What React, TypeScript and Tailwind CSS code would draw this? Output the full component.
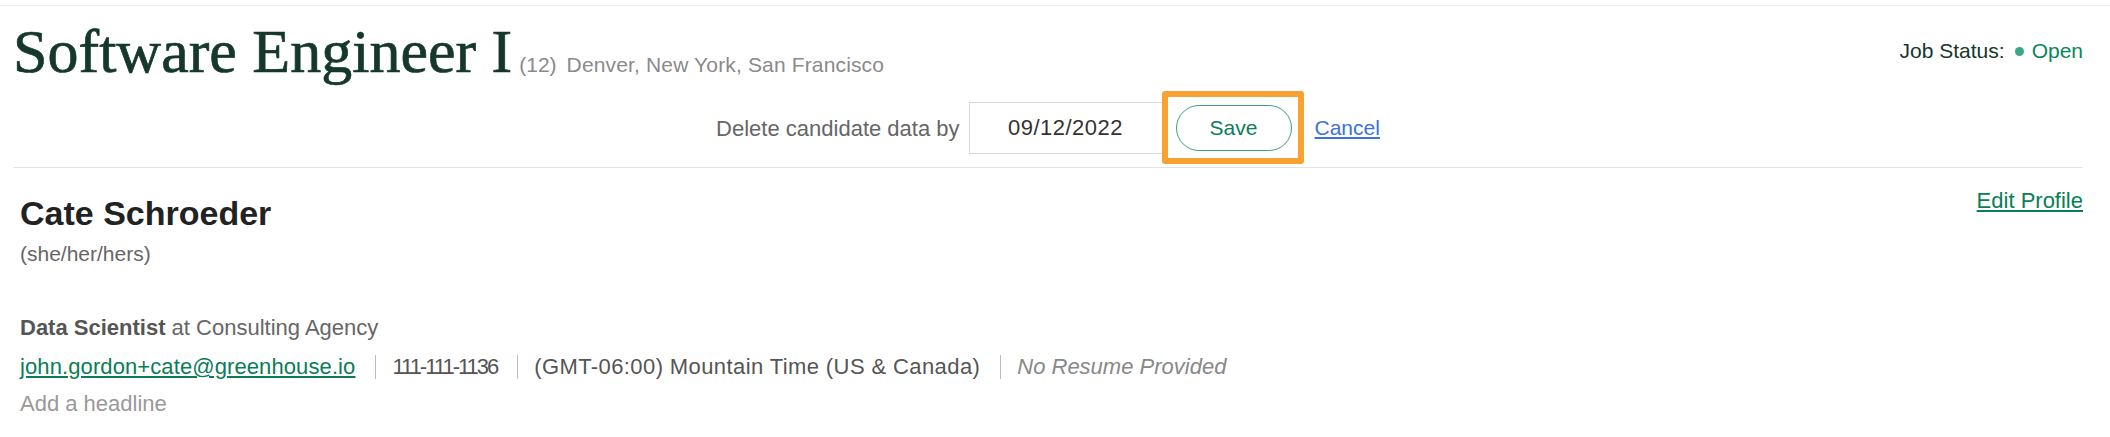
import React from "react";

const sans = "font-['Liberation_Sans','Helvetica','Arial',sans-serif]";

function JobHeader() {
  return (
    <header className="pl-[13px] pr-[27px]">
      <div className="flex items-center justify-between pt-[9px]">
        <div className="flex items-baseline">
          <h1 className="font-['Liberation_Serif','Times_New_Roman',serif] text-[62px] leading-[72px] text-[#15372c] [-webkit-text-stroke:0.7px_#15372c]">
            Software Engineer I
          </h1>
          <span className="ml-[7px] text-[21px] text-[#8a8a8a]">(12)</span>
          <span className="ml-[10px] text-[21px] tracking-[0.15px] text-[#8a8a8a]">Denver, New York, San Francisco</span>
        </div>
        <div className="flex items-center text-[21px] leading-[30px]">
          <span className="text-[#15372c]">Job Status:</span>
          <span className="ml-[10px] h-[9px] w-[9px] rounded-full bg-[#3aa880]" />
          <span className="ml-[8px] text-[#0a8560]">Open</span>
        </div>
      </div>

      <div className="mt-[15px] flex items-center justify-center">
        <span className="text-[22px] text-[#666]">Delete candidate data by</span>
        <input
          readOnly
          value="09/12/2022"
          className="ml-[9px] h-[52px] w-[194px] border border-[#d9d9d9] text-center text-[22px] tracking-[0.5px] text-[#333] outline-none"
        />
        <button className="relative ml-[13px] h-[46px] w-[116px] rounded-full border border-[#3f9d7d] text-[21px] text-[#0b7d57]">
          Save
          <span className="pointer-events-none absolute -top-[15px] -bottom-[14px] -left-[15px] -right-[13px] rounded-[3px] border-[6px] border-[#f8a231]" />
        </button>
        <a href="#" className="ml-[23px] text-[21px] text-[#3b73d9] underline">
          Cancel
        </a>
      </div>

      <div className="mt-[13px] border-b border-[#e3e3e3]" />
    </header>
  );
}

function Sep() {
  return <span className="ml-[20px] mr-[16px] h-[24px] w-px bg-[#bdbdbd]" />;
}

function CandidateCard() {
  return (
    <section className="pl-[20px] pr-[27px] pt-[18px]">
      <div className="flex items-start justify-between">
        <h2 className="text-[34px] font-bold leading-[54px] text-[#222]">Cate Schroeder</h2>
        <a href="#" className="text-[22px] leading-[30px] text-[#0a7d58] underline">
          Edit Profile
        </a>
      </div>
      <div className="text-[21px] leading-[28px] text-[#666]">(she/her/hers)</div>

      <div className="mt-[43px] text-[22px] leading-[34px] text-[#666]">
        <span className="font-bold text-[#555]">Data Scientist</span> at Consulting Agency
      </div>
      <div className="mt-[3px] flex items-center text-[22px] leading-[38px] text-[#555]">
        <a href="#" className="tracking-[0.1px] text-[#0a7d58] underline">
          john.gordon+cate@greenhouse.io
        </a>
        <Sep />
        <span className="tracking-[-2px]">111-111-1136</span>
        <Sep />
        <span className="tracking-[0.4px]">(GMT-06:00) Mountain Time (US &amp; Canada)</span>
        <Sep />
        <span className="italic text-[#888]">No Resume Provided</span>
      </div>
      <div className="mt-[1px] text-[22px] leading-[34px] text-[#999]">Add a headline</div>
    </section>
  );
}

export default function App() {
  return (
    <div className={`min-h-screen bg-white pt-[5px] ${sans}`}>
      <div className="border-t border-[#ececec]">
        <JobHeader />
        <CandidateCard />
      </div>
    </div>
  );
}
